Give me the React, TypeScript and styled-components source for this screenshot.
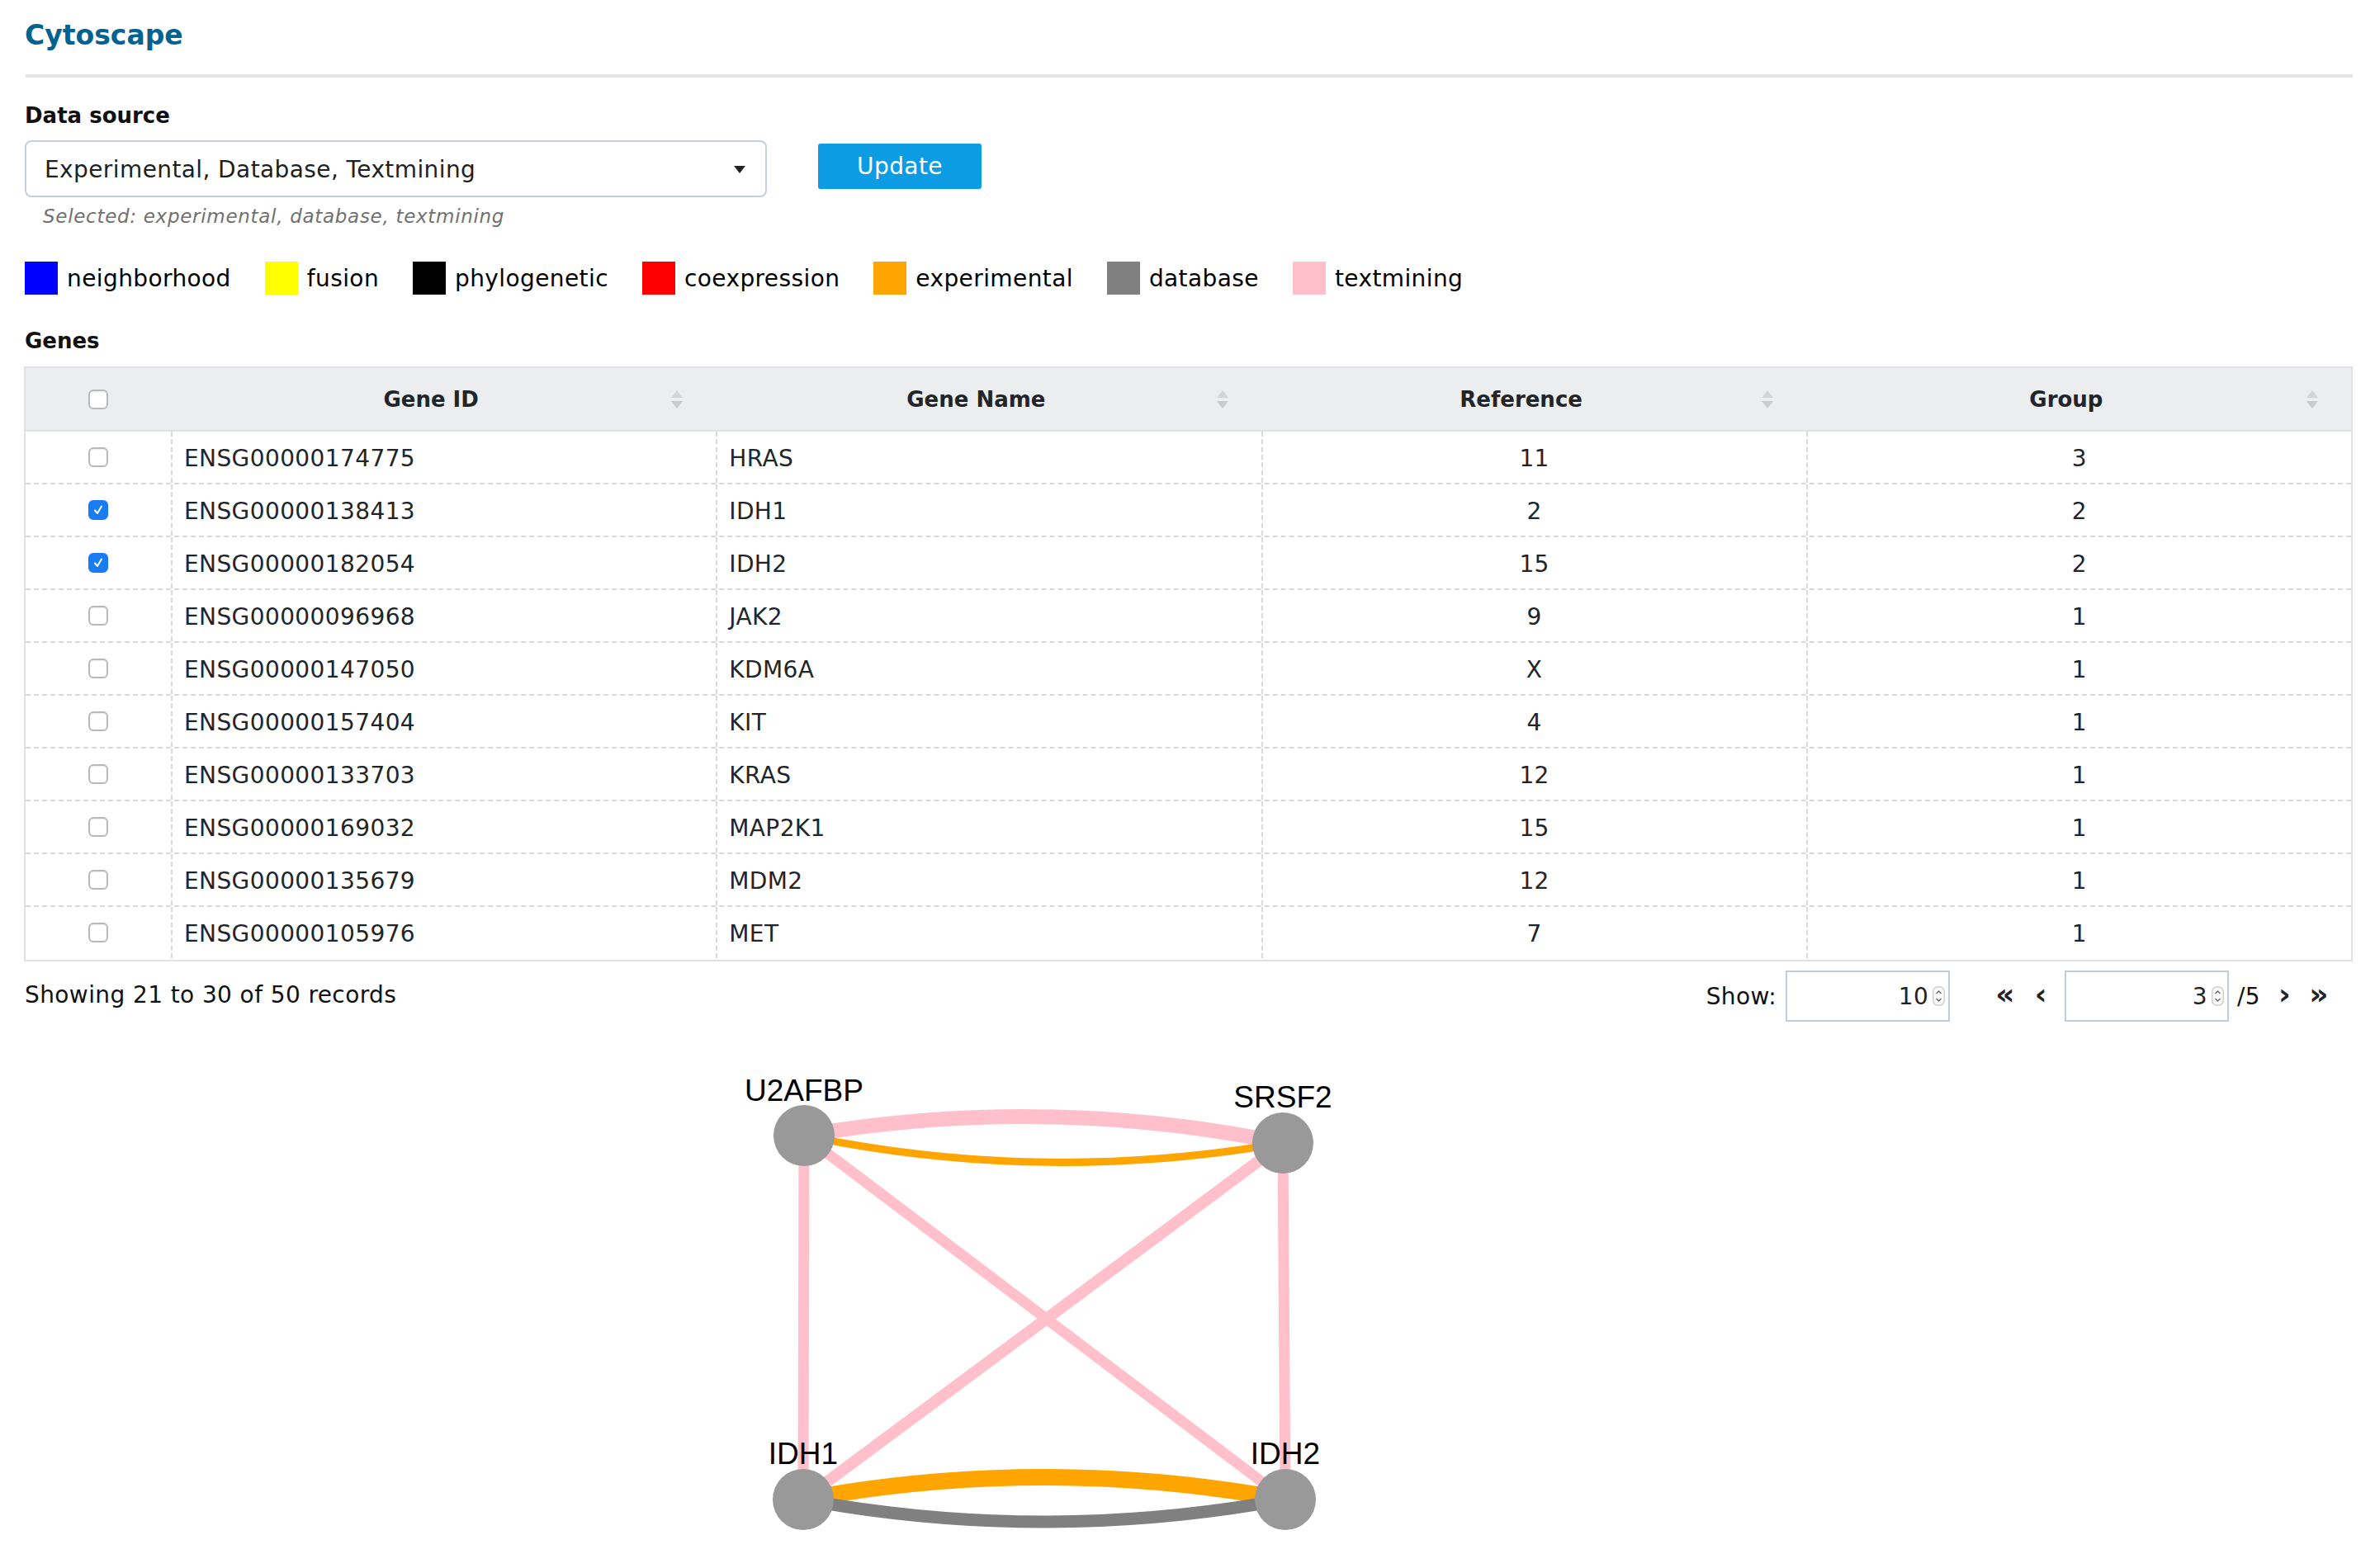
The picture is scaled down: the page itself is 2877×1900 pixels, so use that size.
import React from "react";
import styled, { createGlobalStyle } from "styled-components";

const GlobalStyle = createGlobalStyle`
  html, body { margin: 0; padding: 0; background: #ffffff; }
  body {
    font-family: "DejaVu Sans", "Liberation Sans", sans-serif;
    color: #212529;
    letter-spacing: 0.4px;
  }
  * { box-sizing: border-box; }
`;

const Page = styled.div`
  padding: 23px 27px 0 30px;
`;

const Title = styled.h1`
  margin: 0;
  font-size: 33px;
  line-height: 40px;
  font-weight: 700;
  color: #03628f;
  letter-spacing: 0;
`;

const Rule = styled.hr`
  margin: 27px 0 0 1px;
  border: 0;
  height: 4px;
  background: #e4e4e4;
`;

const SectionLabel = styled.div<{ $mt: number }>`
  margin-top: ${(p) => p.$mt}px;
  font-size: 26px;
  line-height: 32px;
  font-weight: 700;
  color: #111111;
  letter-spacing: 0;
`;

const SourceRow = styled.div`
  display: flex;
  align-items: flex-start;
  gap: 62px;
  margin-top: 14px;
`;

const Select = styled.div`
  width: 899px;
  height: 69px;
  border: 2px solid #c6cfdb;
  border-radius: 8px;
  display: flex;
  align-items: center;
  justify-content: space-between;
  padding: 2px 24px 0 22px;
  font-size: 28px;
  letter-spacing: 0.4px;
  color: #1d1f22;
`;

const UpdateButton = styled.button`
  margin-top: 4px;
  width: 198px;
  height: 55px;
  background: #0c9ce3;
  color: #ffffff;
  border: 0;
  border-radius: 3px;
  font-family: inherit;
  font-size: 28px;
  letter-spacing: 0.4px;
`;

const Hint = styled.div`
  margin-top: 8px;
  padding-left: 22px;
  font-size: 23px;
  line-height: 30px;
  font-style: italic;
  letter-spacing: 0.7px;
  color: #707070;
`;

const Legend = styled.div`
  display: flex;
  gap: 41px;
  margin-top: 40px;
  height: 40px;
`;

const LegendItem = styled.div`
  display: flex;
  align-items: center;
  gap: 11px;
  font-size: 28px;
  color: #000000;
`;

const Swatch = styled.span<{ $color: string }>`
  width: 40px;
  height: 40px;
  background: ${(p) => p.$color};
`;

const Table = styled.div`
  margin-top: 15px;
  margin-left: -1px;
  border: 2px solid #dee1e5;
`;

const HeaderRow = styled.div`
  display: grid;
  grid-template-columns: 176px repeat(4, 1fr);
  height: 77px;
  background: #ecedef;
  border-bottom: 2px solid #dee1e5;
`;

const HeaderCell = styled.div`
  display: flex;
  align-items: center;
  padding: 0 40px 0 24px;
  font-size: 26px;
  font-weight: 700;
  letter-spacing: 0;
  color: #212529;
`;

const HeaderLabel = styled.span`
  flex: 1;
  text-align: center;
`;

const CheckCell = styled.div`
  display: flex;
  align-items: center;
  justify-content: center;
`;

const BodyRow = styled.div`
  display: grid;
  grid-template-columns: 176px repeat(4, 1fr);
  height: 64px;
  border-bottom: 2px dashed #d9d9d9;
  &:last-child {
    border-bottom-color: transparent;
  }
`;

const Cell = styled.div<{ $align?: "left" | "center" }>`
  display: flex;
  align-items: center;
  justify-content: ${(p) => (p.$align === "center" ? "center" : "flex-start")};
  padding: 2px 14px 0;
  border-left: 2px dashed #d9d9d9;
  font-size: 28px;
  color: #212529;
`;

const Box = styled.span<{ $checked?: boolean }>`
  width: 24px;
  height: 24px;
  border-radius: 6px;
  display: flex;
  align-items: center;
  justify-content: center;
  background: ${(p) => (p.$checked ? "#1a7cf5" : "#ffffff")};
  border: 2px solid ${(p) => (p.$checked ? "#1a7cf5" : "#b9b9b9")};
  box-shadow: ${(p) => (p.$checked ? "none" : "inset 0 1px 2px rgba(0,0,0,0.08)")};
`;

const Footer = styled.div`
  display: flex;
  align-items: center;
  justify-content: space-between;
  margin-top: 11px;
  height: 62px;
`;

const Showing = styled.div`
  font-size: 28px;
  color: #111111;
  margin-top: -3px;
`;

const Pager = styled.div`
  display: flex;
  align-items: center;
  padding-right: 29px;
  font-size: 28px;
  color: #111111;
`;

const PagerText = styled.span<{ $ml?: number }>`
  margin-left: ${(p) => p.$ml ?? 0}px;
`;

const NavGlyph = styled.span<{ $ml: number }>`
  margin-left: ${(p) => p.$ml}px;
  font-size: 36px;
  font-weight: 700;
  color: #222222;
  line-height: 1;
  margin-top: -4px;
`;

const NumBox = styled.div<{ $ml: number }>`
  margin-left: ${(p) => p.$ml}px;
  width: 199px;
  height: 62px;
  border: 2px solid #c3cdda;
  display: flex;
  align-items: center;
  justify-content: flex-end;
  padding-right: 4px;
  font-size: 28px;
  color: #222222;
`;

const Spinner = styled.svg`
  margin-left: 5px;
  flex: none;
`;

const Graph = styled.svg`
  display: block;
  margin-top: 12px;
`;

const legend = [
  { label: "neighborhood", color: "#0000ff" },
  { label: "fusion", color: "#ffff00" },
  { label: "phylogenetic", color: "#000000" },
  { label: "coexpression", color: "#ff0000" },
  { label: "experimental", color: "#ffa500" },
  { label: "database", color: "#808080" },
  { label: "textmining", color: "#ffc0cb" },
];

const rows = [
  { id: "ENSG00000174775", name: "HRAS", ref: "11", group: "3", checked: false },
  { id: "ENSG00000138413", name: "IDH1", ref: "2", group: "2", checked: true },
  { id: "ENSG00000182054", name: "IDH2", ref: "15", group: "2", checked: true },
  { id: "ENSG00000096968", name: "JAK2", ref: "9", group: "1", checked: false },
  { id: "ENSG00000147050", name: "KDM6A", ref: "X", group: "1", checked: false },
  { id: "ENSG00000157404", name: "KIT", ref: "4", group: "1", checked: false },
  { id: "ENSG00000133703", name: "KRAS", ref: "12", group: "1", checked: false },
  { id: "ENSG00000169032", name: "MAP2K1", ref: "15", group: "1", checked: false },
  { id: "ENSG00000135679", name: "MDM2", ref: "12", group: "1", checked: false },
  { id: "ENSG00000105976", name: "MET", ref: "7", group: "1", checked: false },
];

const SortIcon = () => (
  <svg width="14" height="22" viewBox="0 0 14 22">
    <polygon points="7,0 14,9 0,9" fill="#d2d4d7" />
    <polygon points="0,13 14,13 7,22" fill="#c9cbcf" />
  </svg>
);

const Check = ({ checked }: { checked?: boolean }) => (
  <Box $checked={checked}>
    {checked && (
      <svg width="14" height="14" viewBox="0 0 14 14">
        <path d="M3 7.5 L6 11 L11 2.5" stroke="#ffffff" strokeWidth="2" fill="none" strokeLinecap="round" strokeLinejoin="round" />
      </svg>
    )}
  </Box>
);

const SpinIcon = () => (
  <Spinner width="15" height="24" viewBox="0 0 15 24">
    <rect x="0.75" y="0.75" width="13.5" height="22.5" rx="6" fill="#fafafa" stroke="#cfcfcf" strokeWidth="1.5" />
    <path d="M4.5 9 L7.5 6 L10.5 9" stroke="#666" strokeWidth="1.3" fill="none" />
    <path d="M4.5 15 L7.5 18 L10.5 15" stroke="#666" strokeWidth="1.3" fill="none" />
  </Spinner>
);

const nodes = {
  U2AFBP: { x: 944, y: 126, ly: 84 },
  SRSF2: { x: 1524, y: 135, ly: 92 },
  IDH1: { x: 943, y: 567, ly: 524 },
  IDH2: { x: 1527, y: 567, ly: 524 },
};

const NetworkGraph = () => {
  const { U2AFBP: a, SRSF2: b, IDH1: c, IDH2: d } = nodes;
  return (
    <Graph width="2000" height="640" viewBox="0 0 2000 640">
      <g fill="none" strokeLinecap="butt">
        <path d={`M${a.x} ${a.y} Q1234 76 ${b.x} ${b.y}`} stroke="#ffc0cb" strokeWidth="18" />
        <path d={`M${a.x} ${a.y} Q1234 186 ${b.x} ${b.y}`} stroke="#ffa500" strokeWidth="9" />
        <line x1={a.x} y1={a.y} x2={c.x} y2={c.y} stroke="#ffc0cb" strokeWidth="13" />
        <line x1={b.x} y1={b.y} x2={d.x} y2={d.y} stroke="#ffc0cb" strokeWidth="13" />
        <line x1={a.x} y1={a.y} x2={d.x} y2={d.y} stroke="#ffc0cb" strokeWidth="13" />
        <line x1={b.x} y1={b.y} x2={c.x} y2={c.y} stroke="#ffc0cb" strokeWidth="14" />
        <path d={`M${c.x} ${c.y} Q1234 513 ${d.x} ${d.y}`} stroke="#ffa500" strokeWidth="20" />
        <path d={`M${c.x} ${c.y} Q1234 621 ${d.x} ${d.y}`} stroke="#808080" strokeWidth="15" />
      </g>
      {Object.entries(nodes).map(([name, n]) => (
        <circle key={name} cx={n.x} cy={n.y} r="37" fill="#999999" />
      ))}
      {Object.entries(nodes).map(([name, n]) => (
        <text
          key={name + "-l"}
          x={n.x}
          y={n.ly}
          textAnchor="middle"
          fontFamily="'Liberation Sans', Arial, sans-serif"
          fontSize="37"
          fill="#000000"
          letterSpacing="0"
        >
          {name}
        </text>
      ))}
    </Graph>
  );
};

export default function App() {
  return (
    <>
      <GlobalStyle />
      <Page>
        <Title>Cytoscape</Title>
        <Rule />
        <SectionLabel $mt={30}>Data source</SectionLabel>
        <SourceRow>
          <Select>
            <span>Experimental, Database, Textmining</span>
            <svg width="14" height="9" viewBox="0 0 14 9">
              <polygon points="0,0 14,0 7,9" fill="#222222" />
            </svg>
          </Select>
          <UpdateButton>Update</UpdateButton>
        </SourceRow>
        <Hint>Selected: experimental, database, textmining</Hint>
        <Legend>
          {legend.map((l) => (
            <LegendItem key={l.label}>
              <Swatch $color={l.color} />
              {l.label}
            </LegendItem>
          ))}
        </Legend>
        <SectionLabel $mt={40}>Genes</SectionLabel>
        <Table>
          <HeaderRow>
            <CheckCell>
              <Check />
            </CheckCell>
            {["Gene ID", "Gene Name", "Reference", "Group"].map((h) => (
              <HeaderCell key={h}>
                <HeaderLabel>{h}</HeaderLabel>
                <SortIcon />
              </HeaderCell>
            ))}
          </HeaderRow>
          {rows.map((r) => (
            <BodyRow key={r.id}>
              <CheckCell>
                <Check checked={r.checked} />
              </CheckCell>
              <Cell>{r.id}</Cell>
              <Cell>{r.name}</Cell>
              <Cell $align="center">{r.ref}</Cell>
              <Cell $align="center">{r.group}</Cell>
            </BodyRow>
          ))}
        </Table>
        <Footer>
          <Showing>Showing 21 to 30 of 50 records</Showing>
          <Pager>
            <PagerText>Show:</PagerText>
            <NumBox $ml={11}>
              10
              <SpinIcon />
            </NumBox>
            <NavGlyph $ml={55}>«</NavGlyph>
            <NavGlyph $ml={24}>‹</NavGlyph>
            <NumBox $ml={21}>
              3
              <SpinIcon />
            </NumBox>
            <PagerText $ml={10}>/5</PagerText>
            <NavGlyph $ml={22}>›</NavGlyph>
            <NavGlyph $ml={22}>»</NavGlyph>
          </Pager>
        </Footer>
        <NetworkGraph />
      </Page>
    </>
  );
}
